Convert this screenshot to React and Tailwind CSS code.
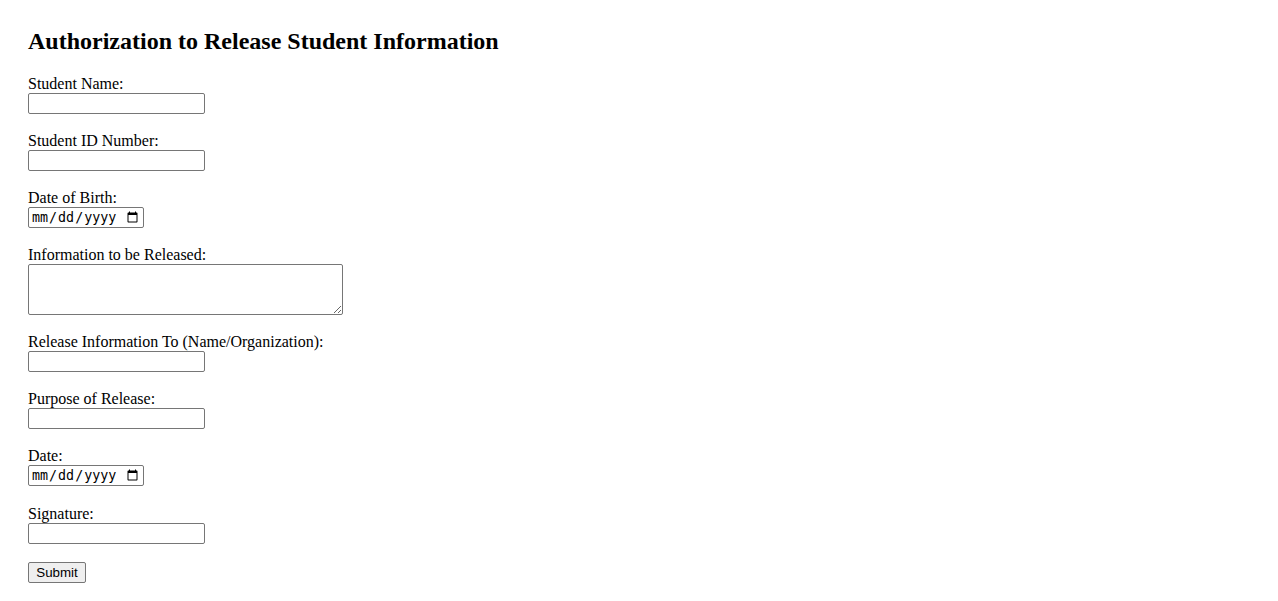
export default function App() {
  const fields = [
    { label: 'Student Name:', type: 'text' },
    { label: 'Student ID Number:', type: 'text' },
    { label: 'Date of Birth:', type: 'date' },
    { label: 'Information to be Released:', type: 'textarea' },
    { label: 'Release Information To (Name/Organization):', type: 'text' },
    { label: 'Purpose of Release:', type: 'text' },
    { label: 'Date:', type: 'date', extra: true },
    { label: 'Signature:', type: 'text' },
  ];

  const inputCls = 'block h-[21px] border border-[#767676] rounded-[2px] bg-white px-[2px] text-[13.33px] text-black';

  return (
    <div className="min-h-screen bg-white text-black font-['Liberation_Serif',serif] pl-[28px] pt-[27px]">
      <h2 className="text-[24px] leading-[28px] font-bold">Authorization to Release Student Information</h2>
      <form className="mt-[20px] flex flex-col" onSubmit={e => e.preventDefault()}>
        {fields.map((f, i) => (
          <div key={i} className={f.extra ? 'mb-[19px]' : 'mb-[18px]'}>
            <label className="block text-[16px] leading-[18px]">{f.label}</label>
            {f.type === 'textarea' && (
              <textarea className="block w-[315px] h-[51px] border border-[#767676] rounded-[2px] bg-white p-[2px] text-[13.33px] font-['Liberation_Mono',monospace]" />
            )}
            {f.type === 'text' && (
              <input type="text" className={`${inputCls} w-[177px] font-['Liberation_Sans',sans-serif]`} />
            )}
            {f.type === 'date' && (
              <input type="date" className={`${inputCls} w-[116px] font-['DejaVu_Sans_Mono',monospace] text-[12px]`} />
            )}
          </div>
        ))}
        <button type="submit" className="block h-[21px] w-[58px] border border-[#767676] rounded-[2px] bg-[#efefef] text-[13.33px] font-['Liberation_Sans',sans-serif] leading-none">
          Submit
        </button>
      </form>
    </div>
  );
}
